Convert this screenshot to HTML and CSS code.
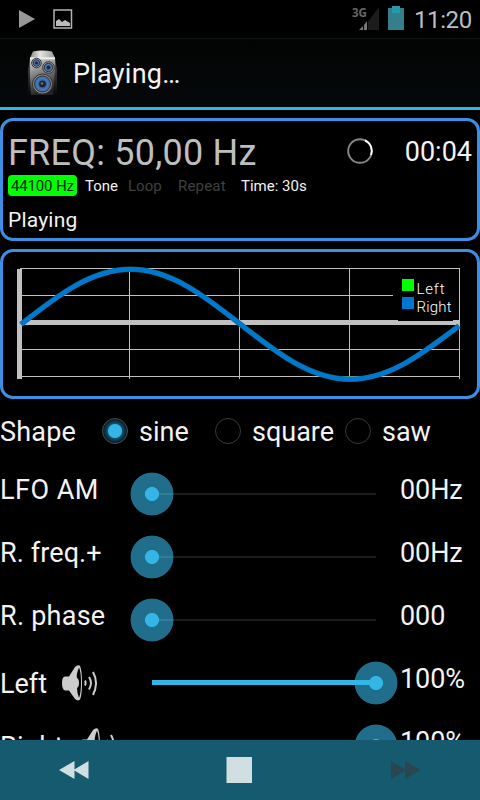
FILE: index.html
```html
<!DOCTYPE html>
<html lang="en">
<head>
<meta charset="utf-8">
<title>Playing</title>
<link rel="stylesheet" href="styles.css">
</head>
<body>
<div class="screen">
  <header class="status">
    <svg class="status-left" width="60" height="38" viewBox="15 0 60 38">
      <path d="M19 10v18l16-9z" fill="#999"/>
      <rect x="54" y="10" width="17.500" height="18" fill="none" stroke="#b3b3b3" stroke-width="1.5"/>
      <path d="M56 26v-5l3-2 3 3 3-2 5 3v3z" fill="#bbb"/>
    </svg>
    <svg class="signal" width="54" height="38" viewBox="351 0 54 38">
      <text x="352" y="17" class="net" textLength="15" lengthAdjust="spacingAndGlyphs">3G</text>
      <path d="M368 21.5L379 7v23h-11z" fill="#1c1c1c"/>
      <path d="M359 30l4-4v4zM364 25l3-4v9h-3z" fill="#777"/>
      <path d="M388 8h16v22h-16z" fill="#34808a"/>
      <path d="M392 6h8v7h-8z" fill="#2797ae"/>
    </svg>
    <span class="clock">11:20</span>
  </header>
  <div class="actionbar">
    <svg class="speaker" width="32" height="48" viewBox="0 0 32 48">
      <defs>
        <linearGradient id="body" x1="0" y1="0" x2=".25" y2="1"><stop offset="0" stop-color="#ddd"/><stop offset=".45" stop-color="#888"/><stop offset="1" stop-color="#222"/></linearGradient>
        <linearGradient id="side" x1="0" y1="0" x2="0" y2="1"><stop offset="0" stop-color="#555"/><stop offset="1" stop-color="#080808"/></linearGradient>
        <linearGradient id="lid"><stop offset="0" stop-color="#888"/><stop offset=".4" stop-color="#e4e4e4"/><stop offset="1" stop-color="#999"/></linearGradient>
        <radialGradient id="cone"><stop offset=".2" stop-color="#234170"/><stop offset=".7" stop-color="#487cc4"/><stop offset="1" stop-color="#345f9e"/></radialGradient>
      </defs>
      <path d="M3 8L1 20v25h29V20L28 8z" fill="url(#side)"/>
      <path d="M3 7h25v12l-2 26H4L3 27z" fill="url(#body)"/>
      <path d="M6 1.5Q15-.5 25 1.5L28 8H3z" fill="url(#lid)"/>
      <path d="M3 7.3h25v2H3z" fill="#eee"/>
      <g stroke="#333" fill="url(#cone)">
        <circle cx="9.5" cy="13" r="4.8" fill="#aaa"/><circle cx="9.5" cy="13" r="3.3"/>
        <circle cx="21.5" cy="17.5" r="5.8" fill="#999"/><circle cx="21.5" cy="17.5" r="4.2"/>
        <circle cx="15.5" cy="34" r="10" fill="#888"/><circle cx="15.5" cy="34" r="8"/>
      </g>
      <g fill="#222"><circle cx="9.5" cy="13" r="1.3"/><circle cx="21.5" cy="17.5" r="1.7"/><circle cx="15.5" cy="34" r="3.3"/></g>
      <circle cx="15" cy="33.4" r="1.2" fill="#777"/>
    </svg>
    <h1 class="title">Playing…</h1>
  </div>

  <section class="panel info">
    <div class="freq-row">
      <span class="freq">FREQ: 50,00 Hz</span>
      <svg class="spinner" width="28" height="28" viewBox="0 0 28 28">
        <circle cx="14" cy="14" r="11.8" fill="none" stroke="#888" stroke-width="1.900"/>
        <path d="M19 3.3A11.8 11.8 0 0 1 25 18" fill="none" stroke="#fff" stroke-width="1.900"/>
      </svg>
      <span class="elapsed">00:04</span>
    </div>
    <div class="tags">
      <span class="rate">44100 Hz</span>
      <span class="tone">Tone</span>
      <span class="loop off">Loop</span>
      <span class="repeat off">Repeat</span>
      <span class="time">Time: 30s</span>
    </div>
    <div class="state">Playing</div>
  </section>

  <section class="panel chart">
    <svg width="474" height="144" viewBox="3 252 474 144">
      <path d="M20 268.5H460M22 295.5H393M22 349.5H460M22 376.5H460M129.5 268V379M239.5 268V379M349.5 268V379M459.5 268V379" stroke="#c0c0c0" fill="none"/>
      <path d="M17 269h5v110h-5zM22 320h438v5H22z" fill="#c0c0c0"/>
      <path d="M398 275h55v46h-55z" fill="#000"/>
      <path d="M21 324.3C56.8 296.1 91 269.3 130.7 269.3S204.7 296.1 240.5 324.3S310.5 379.3 350.2 379.3S424 352.5 459 326" fill="none" stroke="#006b70" stroke-width="5.4"/>
      <path d="M21 324.3C56.8 296.1 91 269.3 130.7 269.3S204.7 296.1 240.5 324.3S310.5 379.3 350.2 379.3S424 352.5 459 326" fill="none" stroke="#0078d2" stroke-width="4.6"/>
      <path d="M402 279h12v12h-12z" fill="#0f0"/>
      <path d="M402 297h12v12h-12z" fill="#0078d2"/>
      <text x="416.500" y="294" class="legend" textLength="28">Left</text>
      <text x="416.500" y="312" class="legend" textLength="35">Right</text>
    </svg>
  </section>

  <main class="controls">
    <div class="shape">
      <span class="shape-label">Shape</span>
      <span class="radio on"></span><span class="opt sine">sine</span>
      <span class="radio"></span><span class="opt square">square</span>
      <span class="radio"></span><span class="opt">saw</span>
    </div>
    <div class="row"><span class="label lfo">LFO AM</span><div class="slider"><i class="thumb"></i></div><span class="value">00Hz</span></div>
    <div class="row"><span class="label rfreq">R. freq.+</span><div class="slider"><i class="thumb"></i></div><span class="value">00Hz</span></div>
    <div class="row"><span class="label rphase">R. phase</span><div class="slider"><i class="thumb"></i></div><span class="value">000</span></div>
    <div class="row volume"><span class="label left">Left
      <svg class="vol" width="36" height="38" viewBox="61 664 36 38"><use href="#sound"/></svg></span>
      <div class="slider full"><i class="thumb"></i></div><span class="value">100%</span></div>
    <div class="row volume"><span class="label right">Right
      <svg class="vol" width="36" height="38" viewBox="61 664 36 38">
        <g id="sound"><path d="M65 676.500h4L75 667q3-3 5-1.200Q82 671 82 683t-2 16.500q-2 2-5-.5l-6-8.500h-4q-3-1-3-7.500t3-6.500z" fill="#ccc"/>
        <path d="M79 667.500q-3 7-2 10.500 2 1 2 5t-2 5q0 5 2 10 2-5 2-15.500t-2-15z" fill="#000"/>
        <path d="M85 680.500q1.200 2.500 0 5M89 677q4 6 0 12.500M93 672q6 11 0 23" fill="none" stroke="#ccc" stroke-width="2"/></g>
      </svg></span>
      <div class="slider full"><i class="thumb"></i></div><span class="value">100%</span></div>
  </main>

  <footer class="player">
    <svg width="32" height="18" viewBox="0 0 32 18"><path d="M0 9L15.500 0v18zM14.500 9L29.500 0v18z" fill="#d1dfe3"/></svg>
    <svg width="26" height="26" viewBox="0 0 26 26"><path d="M.5 0h25.500v26H.5z" fill="#d1dfe3"/></svg>
    <svg width="30" height="18" viewBox="0 0 30 18"><path d="M0 0L15 9 0 18zM14 0L29.500 9 14 18z" fill="#2b464f"/></svg>
  </footer>
</div>
</body>
</html>
```
FILE: styles.css
```css
* { box-sizing: border-box; }
body { margin: 0; background: #000; }
.screen {
  width: 480px; height: 800px; overflow: hidden;
  display: flex; flex-direction: column;
  background: #000; color: #f3f3f3;
  font-family: Roboto, sans-serif; font-size: 27px; white-space: nowrap;
}
.status { flex: none; height: 38px; display: flex; padding-left: 15px; }
.signal { margin-left: 276px; }
.net { font: bold 13px "Open Sans", sans-serif; fill: #666; }
.clock { font-size: 24px; line-height: 40px; letter-spacing: -.4px; color: #bebebe; margin-left: 9px; }
.actionbar {
  flex: none; height: 72px; display: flex; align-items: center;
  padding-left: 27px; border-top: 1px solid #151515; border-bottom: 3px solid #33b5e5;
  background: linear-gradient(#020303, #06090b);
}
.speaker { flex: none; margin-top: 1px; }
.title { margin: 2px 0 0 14px; font-size: 27px; font-weight: 400; line-height: 68px; letter-spacing: .25px; }

.panel { flex: none; border: 3px solid #3d8fe4; border-radius: 13px; background: #000; }
.info { height: 123px; margin-top: 8px; padding: 0 5px; }
.chart { height: 150px; margin-top: 8px; }
.chart svg { display: block; }
.freq-row { height: 54px; display: flex; }
.freq { width: 338px; font-size: 36px; line-height: 65px; letter-spacing: .22px; color: #bebebe; }
.spinner { flex: none; margin-top: 16px; }
.elapsed { margin-left: auto; line-height: 62px; }
.tags { height: 22px; display: flex; font-size: 15px; line-height: 22px; }
.rate { width: 69px; height: 21px; padding-left: 3px; border-radius: 4px; background: #0f0; color: #071c07; letter-spacing: -.15px; }
.tone { width: 43px; margin-left: 8px; }
.loop { width: 50px; }
.repeat { width: 63px; letter-spacing: .2px; }
.off { color: #404040; }
.state { font-size: 21px; line-height: 46px; letter-spacing: .2px; }
.legend { font: 300 15px Roboto, sans-serif; fill: #fff; }

.controls { flex: 1; min-height: 0; overflow: hidden; }
.shape { height: 63px; display: flex; line-height: 67px; }
.shape-label { width: 102px; letter-spacing: .2px; }
.radio { flex: none; width: 26px; height: 26px; margin: 19px 11px 0 0; border: 1.500px solid #3a3a3a; border-radius: 50%; }
.radio.on { border-color: #484f52; background: radial-gradient(circle, #33b5e5 0 6.500px, #14516a 7.500px, #061820 12px); }
.sine { width: 76px; }
.square { width: 93px; }
.row { height: 63px; display: flex; }
.label { flex: none; width: 152px; line-height: 57px; }
.lfo { letter-spacing: .5px; }
.rfreq { letter-spacing: .1px; }
.rphase { letter-spacing: .25px; }
.slider {
  position: relative; flex: none; width: 224px; height: 64px;
  background: linear-gradient(#1c1c1c, #1c1c1c) 0 31px / 100% 2px no-repeat;
}
.slider.full { background: linear-gradient(#33b5e5, #33b5e5) 0 29px / 100% 5px no-repeat; }
.thumb {
  position: absolute; left: -22px; top: 10px; width: 44px; height: 44px;
  background: radial-gradient(circle, #33b5e5 0 6.700px, #206e8b 7.300px 21px, transparent 21.800px);
}
.slider:not(.full) .thumb::after { content: ""; position: absolute; left: 29px; top: 21px; width: 14px; height: 2px; background: #367b95; }
.full .thumb { left: 202px; }
.full .thumb::after { content: ""; position: absolute; left: 0; top: 19px; width: 20px; height: 5px; background: #33b5e5; }
.value { margin-left: 24px; line-height: 57px; letter-spacing: -.1px; }
.volume .label { display: flex; gap: 15px; line-height: 67px; }
.volume .left { gap: 14px; }
.volume .right { letter-spacing: .3px; }
.volume .slider { top: 0; }
.vol { flex: none; margin-top: 13px; }
.player { flex: none; height: 60px; display: flex; align-items: center; padding-left: 59px; background: #155a6e; }
.player svg:nth-child(2) { margin-left: 135px; }
.player svg:nth-child(3) { margin-left: 139px; }
```
